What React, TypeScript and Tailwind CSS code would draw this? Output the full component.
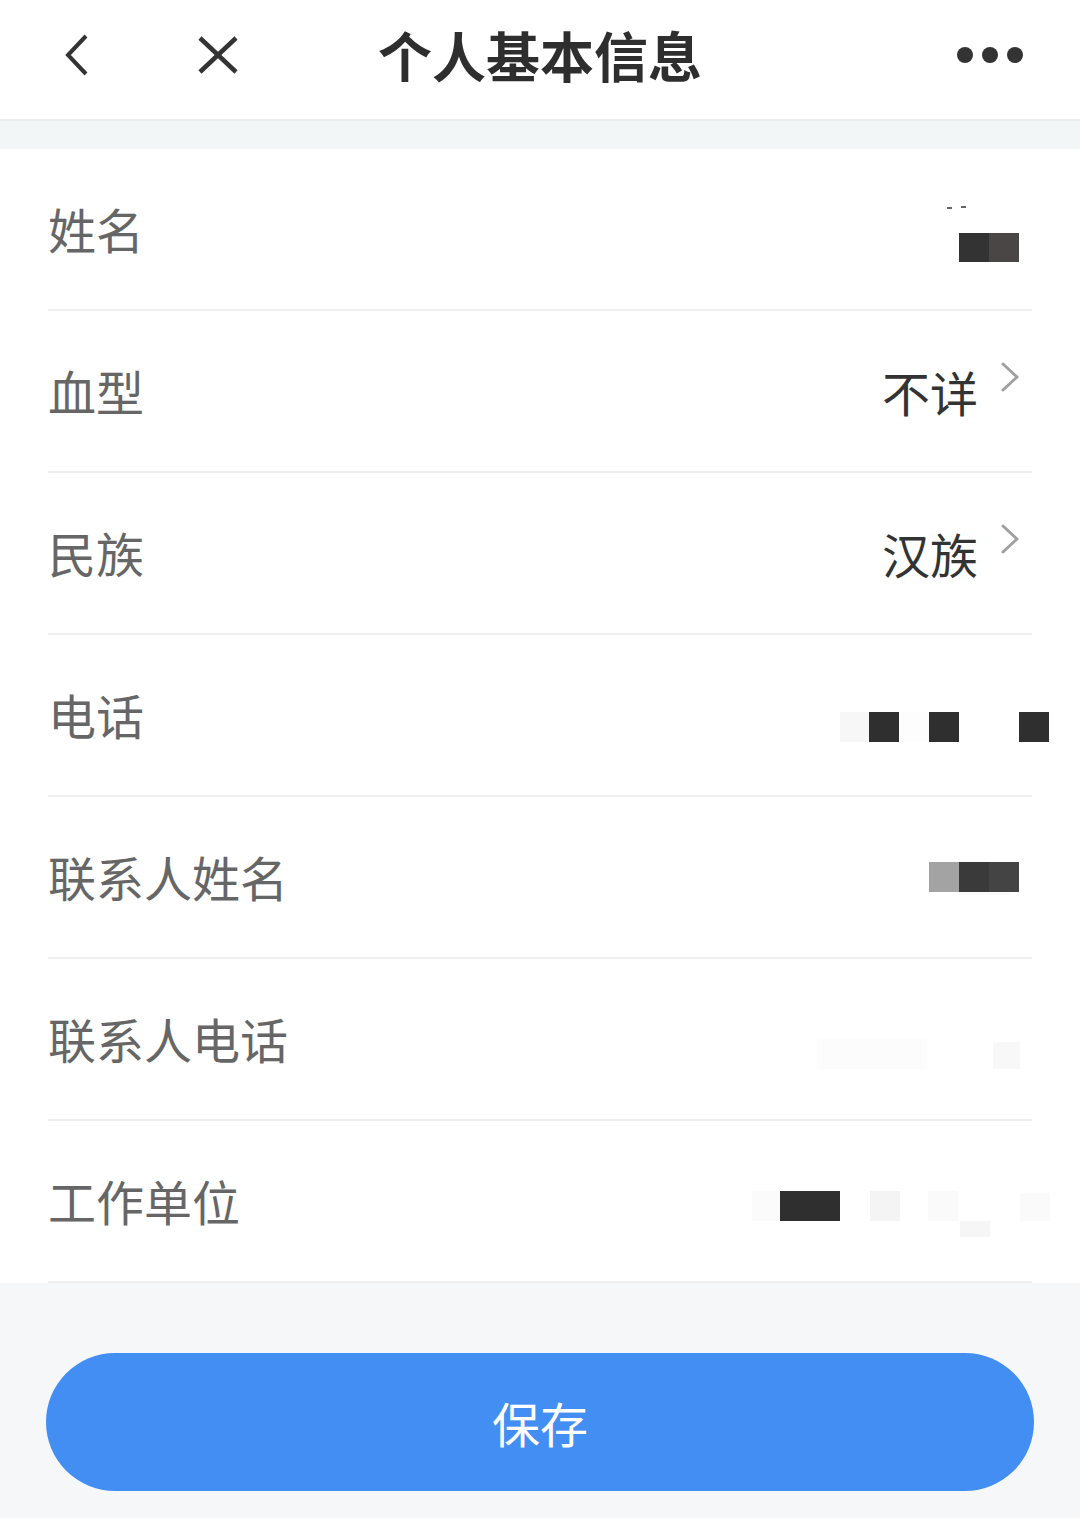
import React from "react";

const FONT = { fontFamily: '"Noto Sans CJK SC", "Noto Sans", sans-serif' };

type Cell = [number, number, number, number, string];

// 打码马赛克：viewBox 直接用页面坐标，方便对照截图
function Mosaic({ box, cells, className }: { box: [number, number, number, number]; cells: Cell[]; className?: string }) {
  const [x, y, w, h] = box;
  return (
    <svg width={w} height={h} viewBox={`${x} ${y} ${w} ${h}`} className={className}>
      {cells.map(([cx, cy, cw, ch, c], i) => (
        <rect key={i} x={cx} y={cy} width={cw} height={ch} fill={c} />
      ))}
    </svg>
  );
}

function Chevron() {
  return (
    <svg width="20" height="32" viewBox="0 0 20 32" className="mb-[28px]">
      <polyline points="3,3 17,16 3,29" fill="none" stroke="#a0a0a0" strokeWidth="3" strokeLinecap="round" strokeLinejoin="round" />
    </svg>
  );
}

function Row({ label, children }: { label: string; children?: React.ReactNode }) {
  return (
    <div className="flex h-[162px] items-center justify-between border-b-2 border-[#efefef]">
      <span className="mb-[3px] text-[48px] leading-none text-[#666]">{label}</span>
      <div className="flex items-center">{children}</div>
    </div>
  );
}

function PickValue({ text }: { text: string }) {
  return (
    <div className="mr-[12px] flex items-center gap-[22px]">
      <span className="text-[48px] leading-none text-[#333]">{text}</span>
      <Chevron />
    </div>
  );
}

export default function App() {
  return (
    <div className="min-h-[1518px] bg-[#f5f7f9]" style={FONT}>
      {/* 顶栏 */}
      <header className="grid h-[121px] grid-cols-[1fr_auto_1fr] items-center border-b-2 border-[#e9ebec] bg-white pb-[10px]">
        <div className="flex items-center pl-[65px]">
          <svg width="24" height="42" viewBox="0 0 24 42">
            <polyline points="21,2 3,21 21,40" fill="none" stroke="#333" strokeWidth="4" strokeLinejoin="miter" />
          </svg>
          <svg width="42" height="38" viewBox="0 0 42 38" className="ml-[108px]">
            <line x1="3" y1="2" x2="39" y2="36" stroke="#333" strokeWidth="4.5" />
            <line x1="39" y1="2" x2="3" y2="36" stroke="#333" strokeWidth="4.5" />
          </svg>
        </div>
        <h1 className="text-[54px] font-bold leading-none text-[#2e2e2e]">个人基本信息</h1>
        <div className="flex items-center justify-end gap-[9px] pr-[57px]">
          <span className="h-[16px] w-[16px] rounded-full bg-[#333]" />
          <span className="h-[16px] w-[16px] rounded-full bg-[#333]" />
          <span className="h-[16px] w-[16px] rounded-full bg-[#333]" />
        </div>
      </header>

      <div className="h-[28px] bg-[#f3f6f7]" />

      {/* 信息列表 */}
      <div className="bg-white px-[48px]">
        <Row label="姓名">
          <Mosaic
            className="mr-[12px]"
            box={[940, 192, 80, 77]}
            cells={[
              [947, 208, 5, 2, "#666"],
              [961, 207, 5, 2, "#666"],
              [959, 234, 30, 29, "#333"],
              [989, 234, 30, 29, "#4a4646"],
            ]}
          />
        </Row>
        <Row label="血型">
          <PickValue text="不详" />
        </Row>
        <Row label="民族">
          <PickValue text="汉族" />
        </Row>
        <Row label="电话">
          <Mosaic
            className="-mr-[18px]"
            box={[838, 689, 212, 54]}
            cells={[
              [840, 713, 29, 30, "#f7f7f7"],
              [869, 713, 30, 30, "#2f2f2f"],
              [899, 713, 30, 30, "#fdfdfd"],
              [929, 713, 30, 30, "#2f2f2f"],
              [1019, 713, 30, 30, "#2f2f2f"],
            ]}
          />
        </Row>
        <Row label="联系人姓名">
          <Mosaic
            className="mr-[12px]"
            box={[925, 860, 95, 36]}
            cells={[
              [929, 863, 30, 30, "#a3a3a3"],
              [959, 863, 30, 30, "#3a3a3a"],
              [989, 863, 30, 30, "#444444"],
              [960, 893, 50, 3, "#fbfbfb"],
            ]}
          />
        </Row>
        <Row label="联系人电话">
          <Mosaic
            className="mr-[12px]"
            box={[815, 1010, 205, 60]}
            cells={[
              [817, 1040, 110, 30, "#fcfcfc"],
              [993, 1043, 27, 27, "#f8f8f8"],
            ]}
          />
        </Row>
        <Row label="工作单位">
          <Mosaic
            className="-mr-[18px]"
            box={[750, 1164, 300, 78]}
            cells={[
              [752, 1193, 28, 30, "#fbfbfb"],
              [780, 1193, 60, 30, "#2f2f2f"],
              [870, 1193, 30, 30, "#f4f4f4"],
              [928, 1193, 30, 30, "#fafafa"],
              [1020, 1195, 30, 28, "#fafafa"],
              [960, 1223, 30, 16, "#f6f6f6"],
            ]}
          />
        </Row>
      </div>

      {/* 底部保存 */}
      <div className="px-[46px] pt-[70px]">
        <button className="flex h-[138px] w-full items-center justify-center rounded-full bg-[#438ef3] text-[48px] leading-none text-white">
          保存
        </button>
      </div>
    </div>
  );
}
